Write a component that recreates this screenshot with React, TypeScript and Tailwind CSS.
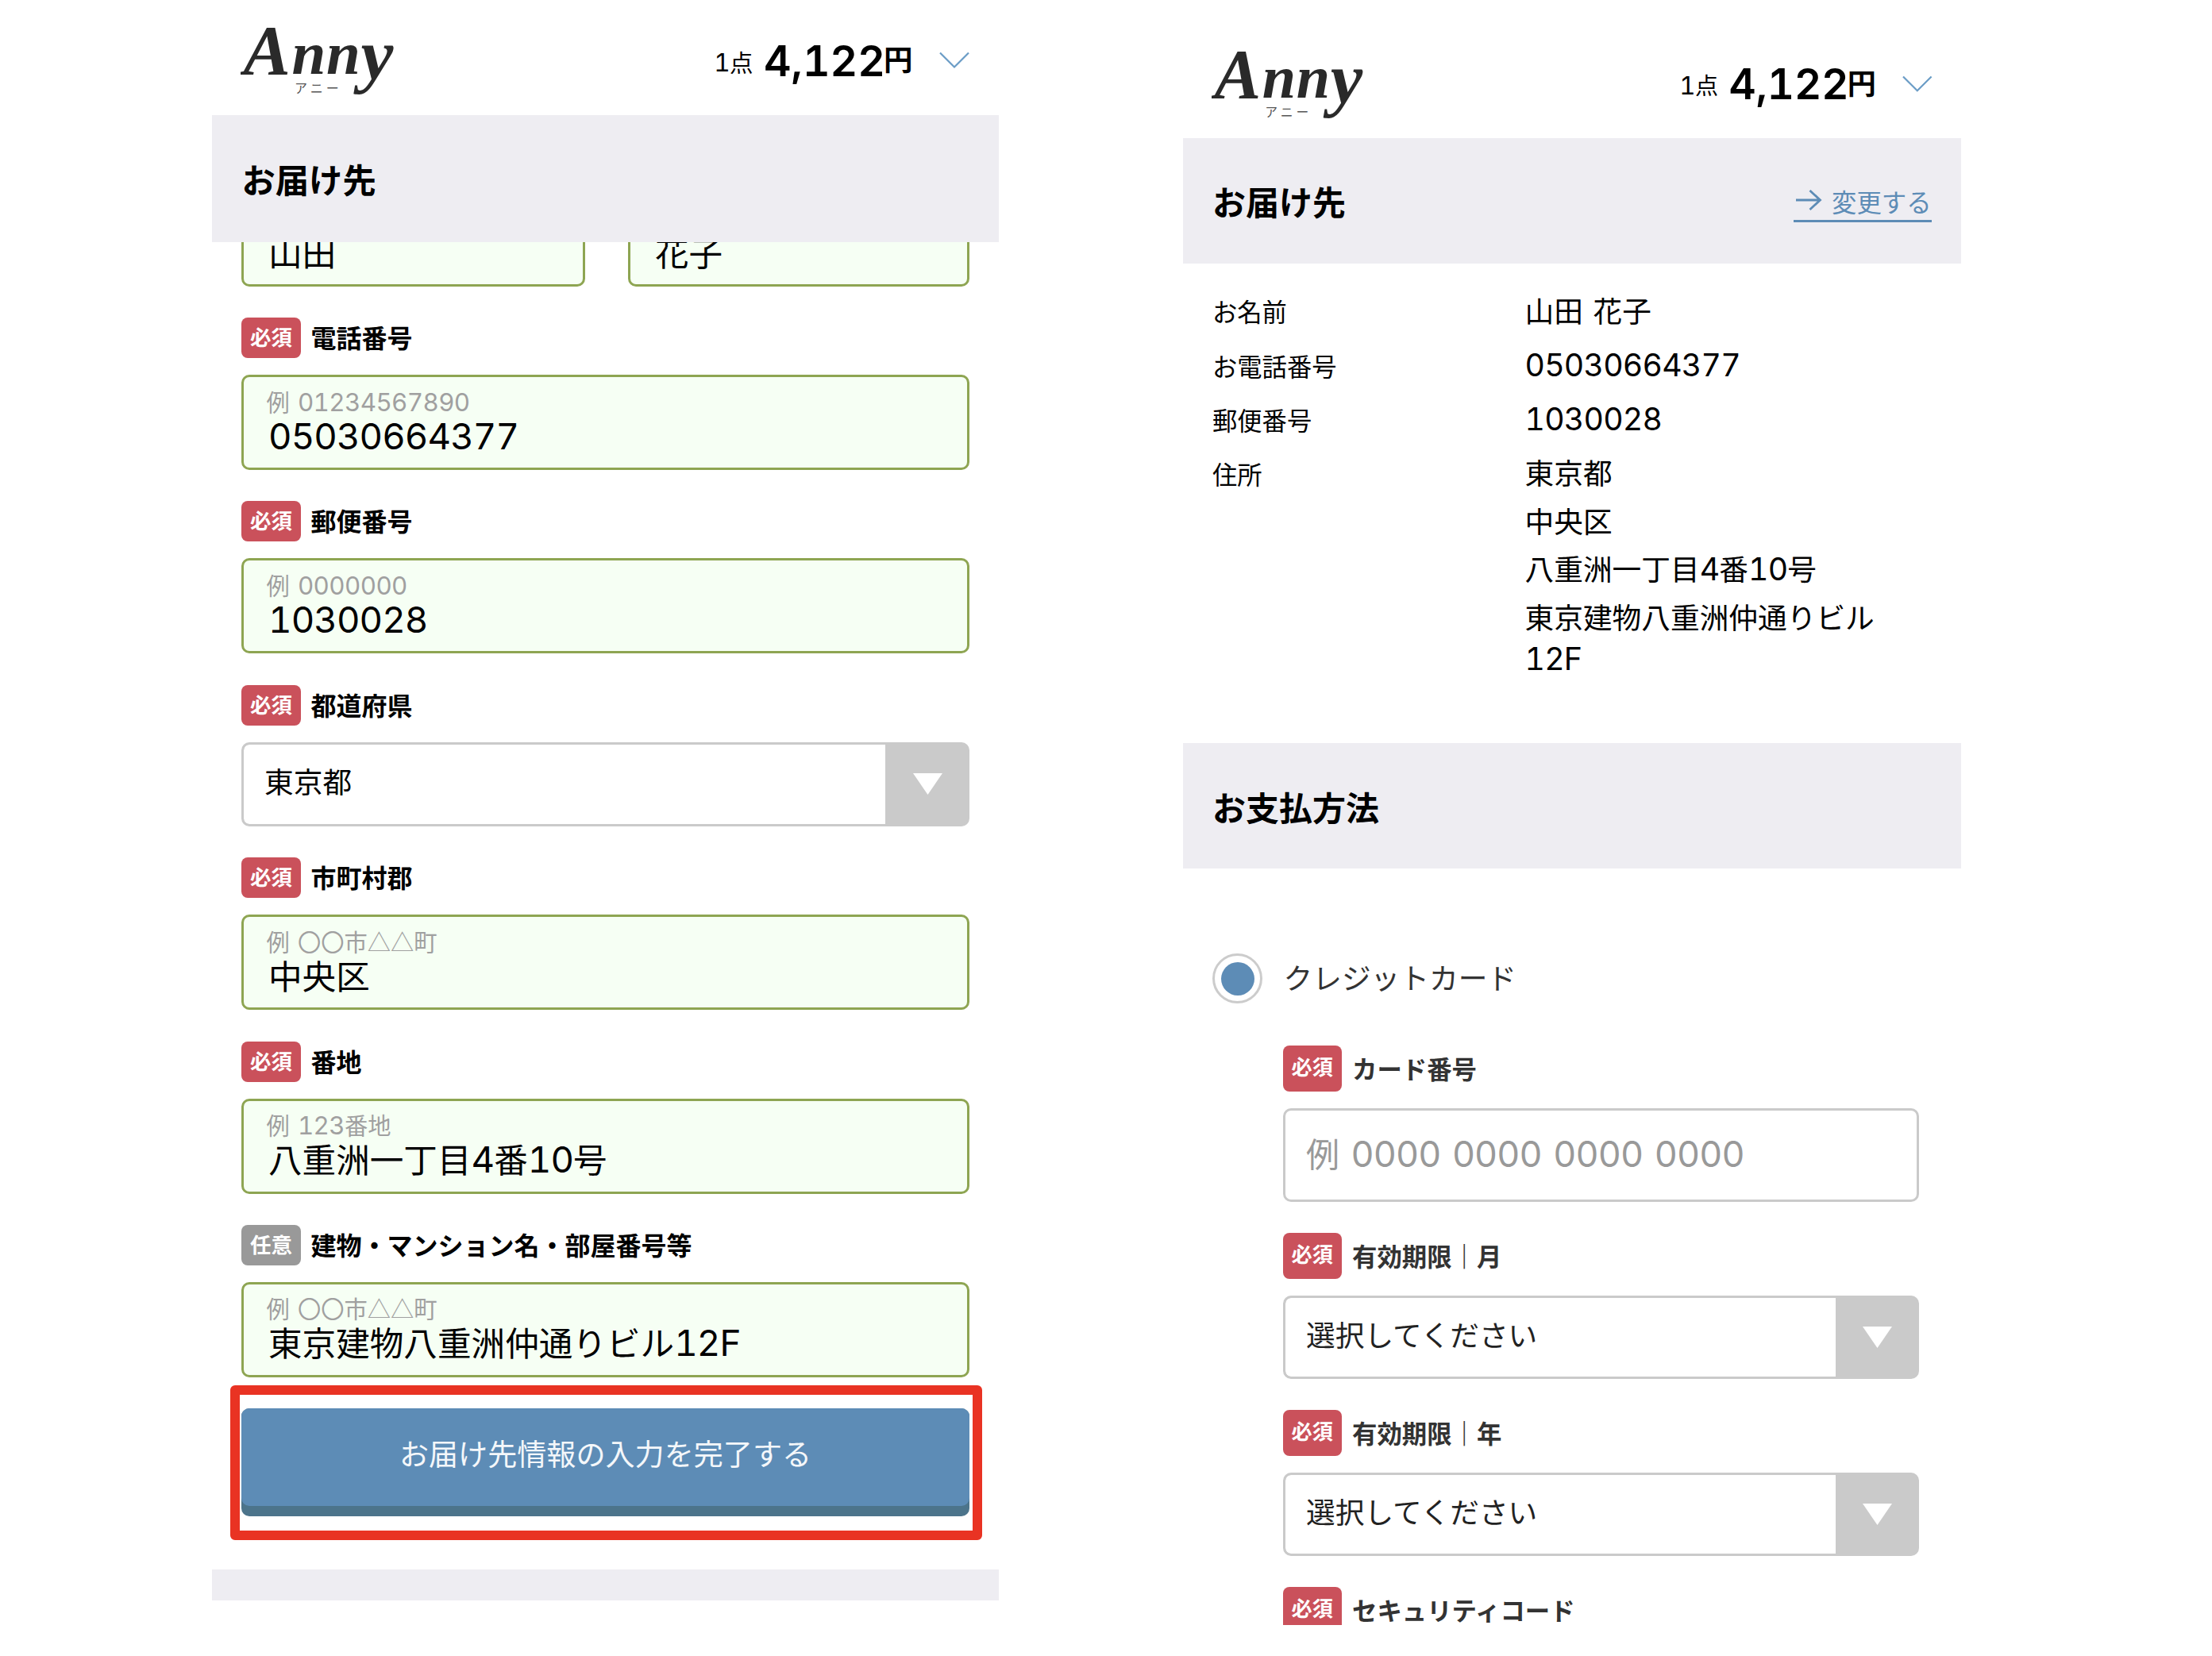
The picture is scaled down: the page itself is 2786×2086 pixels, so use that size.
import React from "react";

/** Japanese text whose Latin letters and digits are set in a wider grotesque. */
function Mixed({ children }: { children: string }) {
  const runs = children.split(/([0-9A-Za-z]+)/).filter(Boolean);
  return (
    <span className="[word-spacing:0.12em]">
      {runs.map((run, i) =>
        /^[0-9A-Za-z]/.test(run) ? (
          <span
            key={i}
            className="font-[Inter,sans-serif] text-[1.07em] leading-none tracking-[-0.02em] tabular-nums"
          >
            {run}
          </span>
        ) : (
          <React.Fragment key={i}>{run}</React.Fragment>
        ),
      )}
    </span>
  );
}

function Logo() {
  return (
    <svg width="196" height="92" viewBox="0 0 196 92" className="mt-[30px] -ml-px block">
      <g fontFamily="'Liberation Serif', serif" fontStyle="italic" fontWeight="700" fill="#2a2a2a">
        <text y="63">
          <tspan x="3.5" fontSize="89">
            A
          </tspan>
          <tspan x="64.5 108" fontSize="77">
            nn
          </tspan>
          <tspan x="151.5" y="70" fontSize="92">
            y
          </tspan>
        </text>
      </g>
      <text
        x="68"
        y="87"
        fontSize="16"
        fill="#555"
        letterSpacing="4"
        fontFamily="'Noto Sans CJK JP', sans-serif"
      >
        アニー
      </text>
    </svg>
  );
}

function Header({ className }: { className: string }) {
  return (
    <header className={`flex h-[145px] w-[991px] items-start px-[37px] ${className}`}>
      <Logo />
      <span className="mt-[57px] ml-auto w-[50px] text-right text-[29.5px] leading-[40px] whitespace-nowrap">
        <Mixed>1点</Mixed>
      </span>
      <span className="mt-[47px] ml-[13.5px] w-[151px] text-center font-[Inter,sans-serif] text-[53.5px] leading-[60px] font-semibold whitespace-nowrap tabular-nums">
        4,122
      </span>
      <span className="mt-[54px] w-[37px] text-[36.5px] leading-[40px] font-bold">円</span>
      <svg
        width="38"
        height="22"
        viewBox="0 0 38 22"
        className="mt-[65px] ml-[33px]"
        fill="none"
        stroke="#6a9cc6"
        strokeWidth="2.2"
      >
        <path d="M1 1.5 L19 19.5 L37 1.5" />
      </svg>
    </header>
  );
}

function Badge({ optional, tall }: { optional?: boolean; tall?: boolean }) {
  return (
    <span
      className={`flex shrink-0 justify-center rounded-[8px] font-bold text-white ${
        tall
          ? "h-[58px] w-[73.5px] text-[26.2px] leading-[53px]"
          : "h-[51px] w-[75px] text-[26.5px] leading-[47px]"
      } ${optional ? "bg-[#999999]" : "bg-[#ca515b]"}`}
    >
      {optional ? "任意" : "必須"}
    </span>
  );
}

function Filled({ hint, value, className = "" }: { hint: string; value: string; className?: string }) {
  return (
    <div
      className={`h-[120px] shrink-0 rounded-[10px] border-[3px] border-[#8ea552] bg-[#f6fff4] pt-[12.5px] pl-[28.5px] ${className}`}
    >
      <div className="h-[35px] text-[29.3px] leading-[35px] whitespace-nowrap text-[#a0a0a0]">
        <Mixed>{hint}</Mixed>
      </div>
      <div className="ml-[2.5px] text-[42.6px] leading-[49px] whitespace-nowrap">
        <Mixed>{value}</Mixed>
      </div>
    </div>
  );
}

function Select({ children, tall }: { children: string; tall?: boolean }) {
  return (
    <div
      className={`flex overflow-hidden rounded-[10px] border-[3px] border-[#cacaca] bg-[#cacaca] ${
        tall ? "h-[106px]" : "h-[105px]"
      }`}
    >
      <div className="flex-1 rounded-l-[7px] bg-white pl-[26px] text-[36.7px] leading-[90px]">
        {children}
      </div>
      <div className={`flex items-center justify-center ${tall ? "w-[103px]" : "w-[102px]"}`}>
        <svg width="37" height="27" viewBox="0 0 37 27" className="-mr-[3px]">
          <path d="M0 0 H37 L18.5 27 Z" fill="#fff" />
        </svg>
      </div>
    </div>
  );
}

function FieldLeft({
  label,
  optional,
  children,
}: {
  label: string;
  optional?: boolean;
  children: React.ReactNode;
}) {
  return (
    <div>
      <div className="mb-[21px] flex h-[51px] gap-[12.5px]">
        <Badge optional={optional} />
        <span className="text-[32px] leading-[48px] font-bold whitespace-nowrap">{label}</span>
      </div>
      {children}
    </div>
  );
}

function FieldRight({ label, children }: { label: string; children?: React.ReactNode }) {
  return (
    <div>
      <div className="mb-[21px] flex h-[58px] gap-[13.5px]">
        <Badge tall />
        <span className="text-[31.4px] leading-[58px] font-bold whitespace-nowrap text-[#333]">
          {label}
        </span>
      </div>
      {children}
    </div>
  );
}

const details: [string, string[]][] = [
  ["お名前", ["山田 花子"]],
  ["お電話番号", ["05030664377"]],
  ["郵便番号", ["1030028"]],
  ["住所", ["東京都", "中央区", "八重洲一丁目4番10号", "東京建物八重洲仲通りビル12F"]],
];

export default function App() {
  return (
    <div className="flex h-[2086px] w-[2786px] overflow-hidden bg-white pl-[267px] font-['Noto_Sans_CJK_JP',sans-serif] text-black">
      {/* Delivery address form */}
      <section className="w-[991px] shrink-0">
        <Header className="" />
        <h2 className="h-[160px] bg-[#eeedf2] pl-[37.5px] text-[42.3px] leading-[160px] font-bold">
          お届け先
        </h2>
        <div className="flex h-[56px] items-end justify-between overflow-hidden px-[37px]">
          <Filled className="w-[433px]" hint="例 山田" value="山田" />
          <Filled className="w-[430px]" hint="例 花子" value="花子" />
        </div>
        <div className="mt-[39px] flex flex-col gap-[39.4px] px-[37px]">
          <FieldLeft label="電話番号">
            <Filled hint="例 01234567890" value="05030664377" />
          </FieldLeft>
          <FieldLeft label="郵便番号">
            <Filled hint="例 0000000" value="1030028" />
          </FieldLeft>
          <FieldLeft label="都道府県">
            <Select tall>東京都</Select>
          </FieldLeft>
          <FieldLeft label="市町村郡">
            <Filled hint="例 〇〇市△△町" value="中央区" />
          </FieldLeft>
          <FieldLeft label="番地">
            <Filled hint="例 123番地" value="八重洲一丁目4番10号" />
          </FieldLeft>
          <FieldLeft label="建物・マンション名・部屋番号等" optional>
            <Filled hint="例 〇〇市△△町" value="東京建物八重洲仲通りビル12F" />
          </FieldLeft>
        </div>
        <div className="mt-[10px] ml-[22.5px] h-[195px] w-[947px] rounded-[6px] border-[12px] border-[#e93323] pt-[17.5px] pl-[2.5px]">
          <button className="block h-[136px] w-[917px] rounded-[10px] bg-[#4c748b] pb-[13px]">
            <span className="block h-[123px] rounded-[10px] bg-[#5d8cb6] text-[37.1px] leading-[113px] text-[#f4f7fa]">
              お届け先情報の入力を完了する
            </span>
          </button>
        </div>
        <div className="mt-[37px] h-[39px] bg-[#eeedf2]" />
      </section>

      {/* Order confirmation and payment */}
      <section className="ml-[232px] h-[2047px] w-[980px] shrink-0 overflow-hidden pt-[31px]">
        <Header className="[zoom:0.989]" />
        <div className="flex h-[158px] justify-between bg-[#eeedf2] pr-[37px] pl-[37px]">
          <h2 className="text-[42px] leading-[158px] font-bold">お届け先</h2>
          <a className="mt-[54px] flex h-[51.5px] w-[174px] items-start border-b-[3px] border-[#5d8cb6] text-[31.4px] leading-[51.5px] text-[#5d8cb6]">
            <svg
              width="34"
              height="26"
              viewBox="0 0 34 26"
              className="mt-[11px] mr-[12px] ml-[2px]"
              fill="none"
              stroke="currentColor"
              strokeWidth="2.8"
            >
              <path d="M1 13 H31 M18.5 1 L31.5 13 L18.5 25" />
            </svg>
            変更する
          </a>
        </div>
        <dl className="flex h-[604px] flex-col gap-[15.7px] pt-[31.5px] pl-[37px]">
          {details.map(([term, lines]) => (
            <div key={term} className="flex">
              <dt className="w-[393.5px] pt-[3.5px] text-[31.3px] leading-[49px]">{term}</dt>
              <dd className="flex w-[460px] flex-col gap-[8px] text-[36.7px] leading-[52.5px]">
                {lines.map((line) => (
                  <p key={line}>
                    <Mixed>{line}</Mixed>
                  </p>
                ))}
              </dd>
            </div>
          ))}
        </dl>
        <h2 className="h-[158px] bg-[#eeedf2] pl-[37px] text-[42px] leading-[159px] font-bold">
          お支払方法
        </h2>
        <div className="mt-[107px] ml-[37px] flex h-[63px] items-center">
          <span className="flex size-[63px] items-center justify-center rounded-full border-[3px] border-[#cccccc]">
            <span className="size-[42px] rounded-full bg-[#5d8cb6]" />
          </span>
          <span className="ml-[26.5px] pb-[6px] text-[36.7px] leading-[56px] text-[#333]">
            クレジットカード
          </span>
        </div>
        <div className="mt-[53px] ml-[126px] flex w-[801px] flex-col gap-[39px] text-[#222]">
          <FieldRight label="カード番号">
            <div className="h-[118px] rounded-[10px] border-[3px] border-[#cacaca] pl-[26px] text-[42px] leading-[106px] whitespace-nowrap text-[#999]">
              <Mixed>例 0000 0000 0000 0000</Mixed>
            </div>
          </FieldRight>
          <FieldRight label="有効期限｜月">
            <Select>選択してください</Select>
          </FieldRight>
          <FieldRight label="有効期限｜年">
            <Select>選択してください</Select>
          </FieldRight>
          <FieldRight label="セキュリティコード" />
        </div>
      </section>
    </div>
  );
}
